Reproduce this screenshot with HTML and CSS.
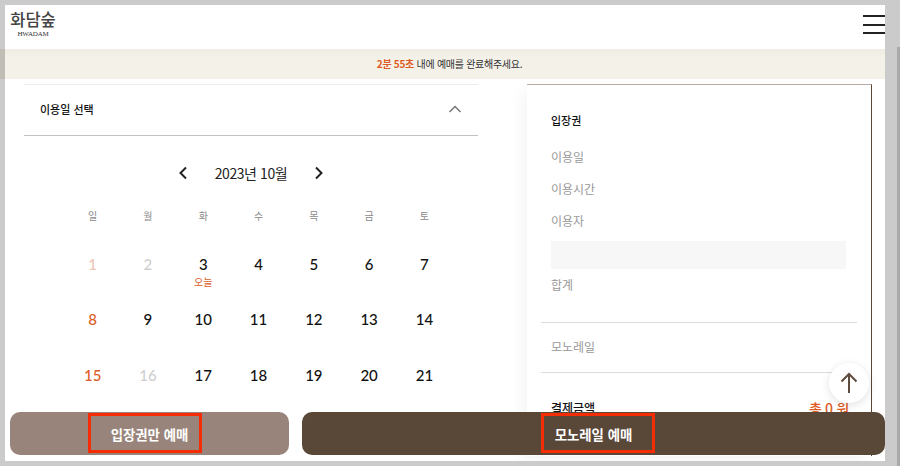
FILE: index.html
```html
<!DOCTYPE html>
<html lang="ko">
<head>
<meta charset="utf-8">
<title>화담숲</title>
<link rel="stylesheet" href="styles.css">
</head>
<body>
<div class="scroll-thumb"></div>
<div class="side-tint"></div>
<div class="page">
  <header class="header">
    <div class="logo">
      <span class="logo-ko">화담숲</span>
      <span class="logo-en">HWADAM</span>
    </div>
    <div class="menu"><i></i><i></i><i></i></div>
  </header>
  <div class="notice"><b>2분 55초</b> 내에 예매를 완료해주세요.</div>
  <main class="content">
    <section class="left">
      <div class="acc">
        <span>이용일 선택</span>
        <svg width="14" height="8" viewBox="0 0 14 8"><path d="M1.5 7L7 1.5 12.5 7" fill="none" stroke="#777" stroke-width="1.5"/></svg>
      </div>
      <div class="month">
        <svg width="10" height="14" viewBox="0 0 10 14"><path d="M8 1.5L2.500 7 8 12.500" fill="none" stroke="#222" stroke-width="2"/></svg>
        <span>2023년 10월</span>
        <svg width="10" height="14" viewBox="0 0 10 14"><path d="M2 1.5L7.500 7 2 12.500" fill="none" stroke="#222" stroke-width="2"/></svg>
      </div>
      <div class="cal">
        <div class="dow">일</div><div class="dow">월</div><div class="dow">화</div><div class="dow">수</div><div class="dow">목</div><div class="dow">금</div><div class="dow">토</div>
        <div class="d sun-off">1</div><div class="d off">2</div><div class="d">3<small>오늘</small></div><div class="d">4</div><div class="d">5</div><div class="d">6</div><div class="d">7</div>
        <div class="d sun">8</div><div class="d">9</div><div class="d">10</div><div class="d">11</div><div class="d">12</div><div class="d">13</div><div class="d">14</div>
        <div class="d sun">15</div><div class="d off">16</div><div class="d">17</div><div class="d">18</div><div class="d">19</div><div class="d">20</div><div class="d">21</div>
      </div>
    </section>
    <aside class="right">
      <h3 class="r-title">입장권</h3>
      <div class="r-row r-first">이용일</div>
      <div class="r-row">이용시간</div>
      <div class="r-row">이용자</div>
      <div class="r-box"></div>
      <div class="r-row r-sum">합계</div>
      <div class="r-line r-line-1"></div>
      <div class="r-row r-mono">모노레일</div>
      <div class="r-line r-line-2"></div>
      <div class="r-total"><span>결제금액</span><b>총 0 원</b></div>
    </aside>
  </main>
  <div class="top-btn">
    <svg width="18" height="22" viewBox="0 0 18 22"><path d="M9 21V2M1.500 9.500L9 2l7.500 7.500" fill="none" stroke="#5f4c3e" stroke-width="2"/></svg>
  </div>
  <footer class="footer">
    <div class="btn btn-light">입장권만 예매</div>
    <div class="btn btn-dark">모노레일 예매</div>
  </footer>
  <div class="mark mark-a"></div>
  <div class="mark mark-b"></div>
</div>
</body>
</html>
```
FILE: styles.css
```css
* { box-sizing: border-box; }
html, body { margin: 0; height: 100%; overflow: hidden; }
body {
  background: #cbcbcb;
  padding: 5px 15px 5px 5px;
  font-family: "Noto Sans CJK KR", "Noto Sans", sans-serif;
  position: relative;
}
.scroll-thumb {
  position: absolute;
  right: 0;
  top: 47px;
  width: 3px;
  height: 419px;
  background: #a9a9a9;
}
.side-tint {
  position: absolute;
  left: 0;
  top: 49px;
  width: 5px;
  height: 30px;
  background: #bfbdb6;
}
.page {
  position: relative;
  width: 880px;
  height: 456px;
  background: #fff;
  overflow: hidden;
}
.header {
  height: 44px;
  padding: 0 0 0 5px;
  display: flex;
  justify-content: space-between;
}
.logo { display: flex; flex-direction: column; align-items: center; width: 46px; padding-top: 4px; }
.logo-ko { font-size: 16.500px; line-height: 20px; color: #444; font-weight: 500; }
.logo-en { font-family: "Liberation Serif", serif; font-size: 7px; line-height: 8px; color: #333; letter-spacing: -0.2px; margin-top: 1px; }
.menu { width: 22px; margin: 10px 0 0 0; display: flex; flex-direction: column; gap: 6.500px; }
.menu i { display: block; height: 2px; background: #222; }
.notice {
  height: 30px;
  padding-left: 9px;
  background: linear-gradient(#efece3, #f4f1e9 30%);
  text-align: center;
  font-size: 10px;
  line-height: 29px;
  letter-spacing: -0.28px;
  color: #333;
}
.notice b { color: #dd5c26; font-weight: 700; }
.content { display: flex; padding: 5px 14px 0 19px; }
.left { width: 454px; flex: none; }
.acc {
  height: 52px;
  border-top: 1px solid #ececec;
  border-bottom: 1px solid #c4c2c0;
  padding: 0 16px 2px;
  display: flex;
  justify-content: space-between;
  align-items: center;
  font-size: 11px;
  font-weight: 500;
  color: #111;
}
.month {
  height: 16px;
  margin-top: 29px;
  display: flex;
  justify-content: center;
  align-items: center;
  gap: 27px;
  font-size: 14px;
  letter-spacing: -0.4px;
  color: #222;
}
.cal {
  display: grid;
  grid-template-columns: repeat(7, 55.3px);
  grid-template-rows: 20px repeat(3, 55.3px);
  margin: 28px 0 0 41px;
}
.dow { font-size: 10px; line-height: 14px; text-align: center; color: #8a8a8a; }
.d {
  position: relative;
  padding-top: 24px;
  text-align: center;
  font-family: Lato, sans-serif;
  font-size: 15px;
  font-weight: 500;
  line-height: 22px;
  color: #111;
}
.d small {
  display: block;
  margin-top: 1px;
  font-family: "Noto Sans CJK KR", sans-serif;
  font-size: 10px;
  line-height: 12px;
  color: #dd5c26;
  font-weight: 400;
}
.sun { color: #dd5c26; }
.sun-off { color: #ecc6b6; }
.off { color: #cfcfcf; }
.right {
  width: 345px;
  height: 372px;
  margin-left: 49px;
  flex: none;
  border-top: 1px solid #b6aba4;
  border-right: 1px solid #5a4637;
  box-shadow: -6px 6px 14px rgba(0, 0, 0, 0.04);
  padding: 27px 14px 0 14px;
  background: #fff;
}
.r-title { margin: 0 0 0 10px; font-size: 11px; line-height: 16px; font-weight: 500; color: #111; }
.r-row { margin: 16px 0 0 10px; font-size: 12px; line-height: 16px; color: #999; }
.r-first { margin-top: 21px; }
.r-box { height: 28px; margin: 12px 11px 0 10px; background: #f7f7f7; }
.r-sum { margin-top: 8px; }
.r-line { height: 1px; background: #dcdcdc; }
.r-line-1 { margin-top: 29px; }
.r-line-2 { margin-top: 17px; }
.r-mono { margin-top: 16px; }
.r-total {
  display: flex;
  justify-content: space-between;
  align-items: center;
  margin: 27px 8px 0 10px;
  font-size: 12px;
  line-height: 16px;
  color: #111;
  font-weight: 500;
}
.r-total b { color: #dd5c26; font-size: 14px; font-weight: 500; letter-spacing: -0.3px; }
.top-btn {
  position: absolute;
  left: 824px;
  top: 358px;
  width: 40px;
  height: 40px;
  border-radius: 50%;
  background: #fff;
  box-shadow: 0 2px 8px rgba(0, 0, 0, 0.12);
  display: flex;
  align-items: center;
  justify-content: center;
}
.footer {
  position: absolute;
  left: 5px;
  top: 407px;
  width: 875px;
  height: 43px;
  display: flex;
  gap: 13px;
}
.btn {
  height: 43px;
  border-radius: 10px;
  display: flex;
  align-items: center;
  justify-content: center;
  color: #fff;
  font-size: 13.400px;
  font-weight: 700;
}
.btn-light { width: 279px; background: #98847a; }
.btn-dark { width: 583px; background: #594738; }
.mark {
  position: absolute;
  top: 408px;
  width: 114px;
  height: 40px;
  border: 3px solid #f52d05;
}
.mark-a { left: 83px; }
.mark-b { left: 536px; }
```
